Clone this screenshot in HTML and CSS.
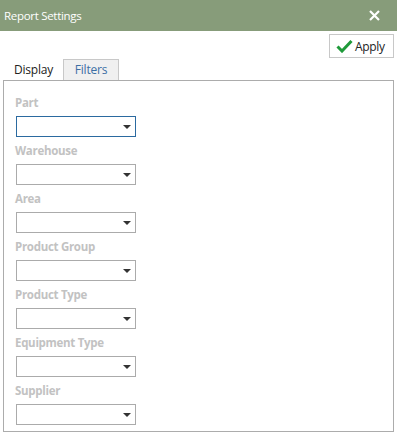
FILE: index.html
```html
<!DOCTYPE html>
<html>
<head>
<meta charset="utf-8">
<link rel="stylesheet" href="styles.css">
</head>
<body>
<div class="dialog">
  <div class="titlebar">
    <span class="title">Report Settings</span>
    <svg class="close" width="11" height="11" viewBox="0 0 11 11"><path d="M1 1 L10 10 M10 1 L1 10" stroke="#fff" stroke-width="2.2"/></svg>
  </div>
  <div class="toolbar">
    <button class="apply">
      <svg width="17" height="14" viewBox="0 0 17 14"><path d="M1.5 7.5 L6 12 L15.5 2" fill="none" stroke="#1f9a3a" stroke-width="3"/></svg>
      <span>Apply</span>
    </button>
  </div>
  <div class="tabs">
    <div class="tab">Display</div>
    <div class="tab active">Filters</div>
  </div>
  <div class="panel">
    <div class="field"><div class="label">Part</div><div class="select focused"><span class="arrow"></span></div></div>
    <div class="field"><div class="label">Warehouse</div><div class="select"><span class="arrow"></span></div></div>
    <div class="field"><div class="label">Area</div><div class="select"><span class="arrow"></span></div></div>
    <div class="field"><div class="label">Product Group</div><div class="select"><span class="arrow"></span></div></div>
    <div class="field"><div class="label">Product Type</div><div class="select"><span class="arrow"></span></div></div>
    <div class="field"><div class="label">Equipment Type</div><div class="select"><span class="arrow"></span></div></div>
    <div class="field"><div class="label">Supplier</div><div class="select"><span class="arrow"></span></div></div>
  </div>
</div>
</body>
</html>
```

FILE: styles.css
```css
html, body {
  margin: 0;
  padding: 0;
  background: #fff;
}
body {
  font-family: "Open Sans", "Noto Sans", sans-serif;
  font-size: 11.5px;
  color: #333;
}
.dialog {
  width: 397px;
  height: 433px;
}
.titlebar {
  height: 31px;
  background: #879c7a;
  display: flex;
  align-items: center;
  justify-content: space-between;
  padding: 0 17px 0 4px;
  color: #fff;
}
.title {
  font-size: 11.5px;
  letter-spacing: -0.3px;
}
.toolbar {
  display: flex;
  justify-content: flex-end;
  padding: 3px 3px 0 0;
  height: 25px;
}
.apply {
  width: 65px;
  height: 24px;
  border: 1px solid #c8c8c8;
  background: #fff;
  display: flex;
  align-items: center;
  gap: 2px;
  padding: 0 0 0 6px;
  font-family: inherit;
  font-size: 12px;
  color: #222;
  letter-spacing: -0.3px;
}
.tabs {
  display: flex;
  padding-left: 3px;
  height: 21px;
  align-items: flex-end;
}
.tab {
  width: 60px;
  box-sizing: border-box;
  height: 21px;
  line-height: 21px;
  padding-left: 11px;
  font-size: 12px;
  color: #222;
  letter-spacing: -0.2px;
}
.tab.active {
  width: 56px;
  padding-left: 0;
  text-align: center;
  background: #f0f0f0;
  border: 1px solid #c8c8c8;
  border-bottom: none;
  color: #3d6fa5;
  height: 21px;
  line-height: 20px;
}
.panel {
  margin: 0 3px;
  border: 1px solid #acacac;
  padding: 13px 0 0 11px;
  box-sizing: border-box;
  height: 352px;
}
.field {
  height: 48px;
}
.label {
  height: 18px;
  line-height: 18px;
  font-weight: bold;
  color: #c2c2c2;
  margin-bottom: 4px;
  letter-spacing: -0.3px;
}
.select {
  width: 120px;
  height: 21px;
  box-sizing: border-box;
  border: 1px solid #ababab;
  margin-left: 1px;
  position: relative;
  background: #fff;
}
.select.focused {
  border-color: #2b6aa0;
}
.arrow {
  position: absolute;
  right: 4px;
  top: 8px;
  width: 0;
  height: 0;
  border-left: 4px solid transparent;
  border-right: 4px solid transparent;
  border-top: 4px solid #333;
}
```
